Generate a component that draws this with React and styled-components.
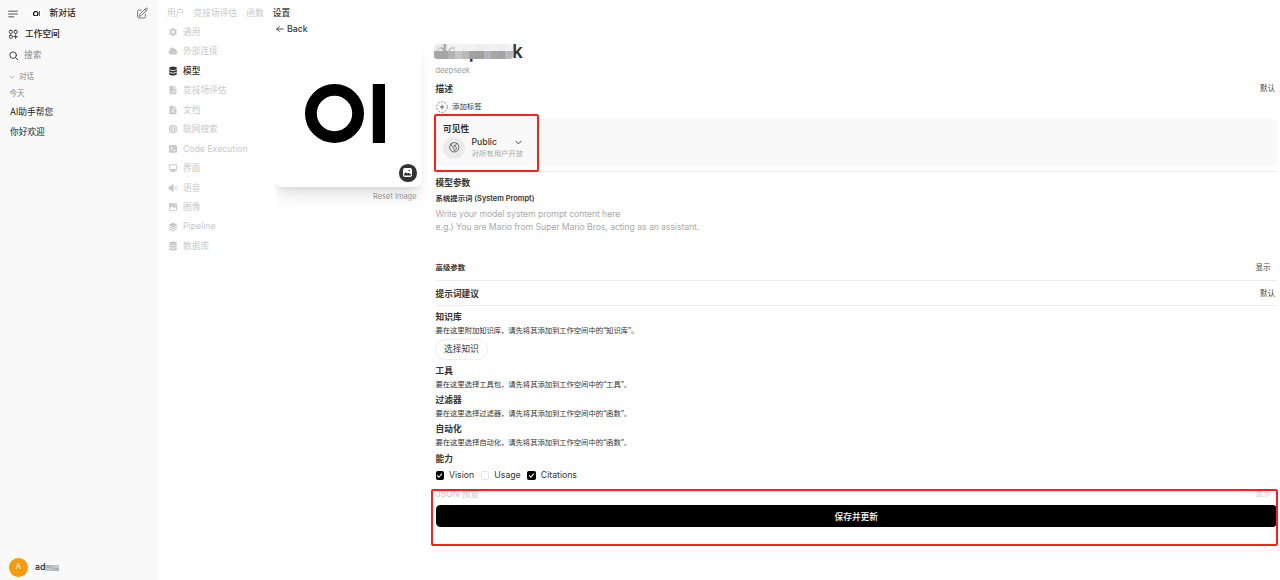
import React from 'react';
import styled, { createGlobalStyle, css } from 'styled-components';
import {
  HiCog6Tooth, HiCloud, HiSpeakerWave,
  HiOutlinePencilSquare, HiOutlineGlobeAmericas,
} from 'react-icons/hi2';

const Global = createGlobalStyle`
  * { box-sizing: border-box; }
  body {
    margin: 0;
    background: #fff;
    color: #333;
    font-family: Inter, "Noto Sans CJK SC", sans-serif;
    font-size: 8.7px;
    line-height: 12.4px;
    overflow: hidden;
  }
  svg { display: block; flex: none; }
`;

const Page = styled.div`
  display: flex;
  width: 1280px;
  height: 580px;
`;

const Sidebar = styled.aside`
  width: 157.5px;
  height: 580px;
  background: #f9f9f9;
  display: flex;
  flex-direction: column;
  flex: none;
  padding: 3px 9px 2px 8px;
`;

const SideRow = styled.div`
  display: flex;
  align-items: center;
  height: ${p => p.$h}px;
  padding-left: ${p => p.$indent || 0}px;
  gap: ${p => p.$gap || 0}px;
  color: ${p => p.$color || '#222'};
  font-size: ${p => (p.$small ? 7.5 : 8.7)}px;
  font-weight: ${p => (p.$medium ? 500 : 400)};
  white-space: nowrap;
`;

const UserRow = styled(SideRow)`
  margin-top: auto;
`;

const Push = styled.div`
  margin-left: auto;
  color: #555;
`;

const MiniLogo = styled.div`
  width: 12px;
  height: 12px;
  border-radius: 50%;
  background: #fff;
  display: flex;
  align-items: center;
  justify-content: center;
  margin: 0 7px 0 12.5px;
`;

const Avatar = styled.div`
  width: 18.5px;
  height: 18.5px;
  border-radius: 50%;
  background: #f39c12;
  color: #fff;
  display: flex;
  align-items: center;
  justify-content: center;
  font-size: 7.5px;
  font-weight: 400;
`;

const Masked = styled.div`
  display: flex;
  align-items: center;
`;

const Mosaic = styled.span`
  display: grid;
  grid-template-columns: repeat(${p => p.$cols}, ${p => p.$w}px);
  grid-auto-rows: ${p => p.$h}px;
  border-radius: ${p => p.$radius || 0}px;
  overflow: hidden;
`;

const Tile = styled.i`
  background: ${p => p.$c};
`;

const Content = styled.main`
  flex: 1;
  display: flex;
  flex-direction: column;
  min-width: 0;
`;

const Tabs = styled.nav`
  display: flex;
  align-items: center;
  gap: 9.2px;
  height: 23px;
  padding: 3px 0 0 9.5px;
`;

const Tab = styled.span`
  color: ${p => (p.$active ? '#333' : '#c9c9c9')};
  font-weight: ${p => (p.$active ? 500 : 400)};
`;

const Body = styled.div`
  display: flex;
  flex: 1;
  min-height: 0;
`;

const Menu = styled.div`
  width: 117.5px;
  flex: none;
  padding-left: 10.5px;
  display: flex;
  flex-direction: column;
`;

const MenuItem = styled.div`
  display: flex;
  align-items: center;
  gap: 5px;
  height: 19.48px;
  padding-bottom: 1.5px;
  color: ${p => (p.$active ? '#333' : '#c9c9c9')};
  font-weight: ${p => (p.$active ? 500 : 400)};
  white-space: nowrap;
`;

const Editor = styled.section`
  flex: 1;
  min-width: 0;
  overflow: hidden;
`;

const Back = styled.div`
  display: flex;
  align-items: center;
  gap: 3px;
  height: 12px;
  padding-left: 1px;
  color: #333;
  font-weight: 500;
  font-size: 8.7px;
`;

const Columns = styled.div`
  display: flex;
  padding-top: 5px;
`;

const ImageColumn = styled.div`
  width: 146.5px;
  flex: none;
`;

const ImageCard = styled.div`
  height: 146.5px;
  border-radius: 7px;
  background: #fff;
  box-shadow: 0 12px 16px -3px rgba(0, 0, 0, 0.1), 0 5px 6px -4px rgba(0, 0, 0, 0.1);
  position: relative;
`;

const ImageBadge = styled.div`
  position: absolute;
  right: 5px;
  bottom: 5px;
  width: 17.5px;
  height: 17.5px;
  border-radius: 50%;
  background: #333;
  display: flex;
  align-items: center;
  justify-content: center;
`;

const Reset = styled.div`
  text-align: right;
  font-size: 7.45px;
  color: #999;
  padding: 4px 5px 0 0;
`;

const Form = styled.div`
  flex: 1;
  min-width: 0;
  margin: 0 3px 0 14px;
`;

const Row = styled.div`
  display: flex;
  align-items: center;
  height: ${p => p.$h}px;
  margin-top: ${p => p.$mt || 0}px;
  padding-top: 1.5px;
  padding-right: ${p => p.$pr ?? 2}px;
  gap: ${p => p.$gap || 0}px;
  color: ${p => p.$color || '#333'};
  font-size: ${p => (p.$small ? 7.4 : 8.7)}px;
  font-weight: ${p => (p.$bold ? 600 : 400)};
  white-space: nowrap;
`;

const Description = styled(Row)`
  font-size: 7.4px;
  letter-spacing: -0.11px;
`;

const Action = styled.span`
  margin-left: auto;
  font-size: 7.5px;
  font-weight: 400;
  color: ${p => p.$color || '#444'};
`;

const Title = styled.div`
  position: relative;
  height: 24px;
  display: flex;
  align-items: center;
  padding-bottom: 2px;
  font-size: 18.6px;
  line-height: 24px;
  font-weight: 600;
  letter-spacing: -0.1px;
`;

const TitleMask = styled.div`
  position: absolute;
  left: -2px;
  top: 4px;
`;

const Panel = styled.div`
  height: 48px;
  margin: 5px 0;
  padding: 4px 0 0 7.5px;
  background: #f9f9f9;
  border-radius: 5px;
  position: relative;
`;

const frame = css`
  position: absolute;
  border: 2px solid #fb1f14;
  border-radius: 2px;
  pointer-events: none;
`;

const PanelFrame = styled.div`
  ${frame}
  left: -2px;
  top: -4px;
  width: 105px;
  height: 58px;
`;

const FooterFrame = styled.div`
  ${frame}
  left: -5px;
  right: -1px;
  top: 0;
  height: 57px;
`;

const Access = styled.div`
  display: flex;
  align-items: center;
  gap: 6.5px;
  padding-top: 1.5px;
`;

const AccessIcon = styled.div`
  width: 22px;
  height: 22px;
  border-radius: 50%;
  background: #ebebeb;
  display: flex;
  align-items: center;
  justify-content: center;
  color: #444;
`;

const AccessText = styled.div`
  display: flex;
  flex-direction: column;
  line-height: 11px;
`;

const AccessSelect = styled.div`
  display: flex;
  align-items: center;
  justify-content: space-between;
  width: 50px;
  font-size: 8.7px;
  font-weight: 500;
`;

const Hint = styled.span`
  font-size: 7.4px;
  color: #aaa;
`;

const Rule = styled.hr`
  height: 1px;
  margin: 0;
  border: 0;
  background: #ececec;
`;

const Prompt = styled.div`
  height: 50px;
  padding-top: 3.3px;
  font-size: 8.7px;
  letter-spacing: -0.085px;
  color: #aaa;
  white-space: pre-line;
`;

const Pill = styled.button`
  display: flex;
  align-items: center;
  height: 20.5px;
  margin: 5px 0 0.5px -0.5px;
  padding: 0 8px;
  border: 1px solid #ededed;
  border-radius: 11px;
  background: #fff;
  color: #333;
  font: inherit;
`;

const Check = styled.span`
  width: 8.5px;
  height: 8.5px;
  border-radius: 1.5px;
  background: ${p => (p.$on ? '#000' : '#fff')};
  border: 1px solid ${p => (p.$on ? '#000' : '#e3e3e3')};
  display: flex;
  align-items: center;
  justify-content: center;
  color: #fff;
`;

const Option = styled.label`
  display: flex;
  align-items: center;
  gap: 5px;
  margin-right: 6.7px;
`;

const Footer = styled.div`
  position: relative;
  margin-top: 9px;
  height: 57px;
`;

const Save = styled.button`
  display: flex;
  align-items: center;
  justify-content: center;
  width: 100%;
  height: 22px;
  margin-top: 6.5px;
  padding: 1.5px 0 0;
  border: 0;
  border-radius: 4.5px;
  background: #000;
  color: #fff;
  font: inherit;
  font-weight: 500;
`;

const OI = ({ width }) => (
  <svg width={width} height={width * 59 / 80} viewBox="0 0 80 59">
    <circle cx="29.5" cy="29.5" r="23.6" fill="none" stroke="#000" strokeWidth="11.8" />
    <path d="M67.8 0H80V59H67.8z" fill="#000" />
  </svg>
);

const LogoHolder = styled.div`
  padding: 43.7px 0 0 30px;
`;

const Stroke = ({ size = 10, d, w = 1.5 }) => (
  <svg width={size} height={size} viewBox="0 0 16 16" fill="none" stroke="currentColor" strokeWidth={w} strokeLinecap="round" strokeLinejoin="round">
    <path d={d} />
  </svg>
);

const Solid = ({ d, size = 10 }) => (
  <svg width={size} height={size} viewBox="0 0 16 16" fill="currentColor" fillRule="evenodd">
    <path d={d} />
  </svg>
);

const TERMINAL = 'M3.5 2h9A1.5 1.5 0 0 1 14.500 3.5v9a1.5 1.5 0 0 1-1.5 1.5h-10A1.5 1.5 0 0 1 1.500 12.500v-9A1.5 1.5 0 0 1 3 2zM4 5.600 5.700 7.200 4 8.800l1 1L7.700 7.200 5 4.600zM8 9.300v1.300h4V9.300z';
const SCREEN = 'M3.5 2h9a2 2 0 0 1 2 2v6a2 2 0 0 1-2 2h-1.6l.8 1.300v.9H4.300v-.9L5.100 12H3.500a2 2 0 0 1-2-2V4a2 2 0 0 1 2-2zM3.700 3.500a.7.7 0 0 0-.7.7V9a.7.7 0 0 0 .7.7h8.600A.7.7 0 0 0 13 9V4.200a.7.7 0 0 0-.7-.7z';
const PHOTO = 'M3.500 2h9a2 2 0 0 1 2 2v8a2 2 0 0 1-2 2h-9a2 2 0 0 1-2-2V4a2 2 0 0 1 2-2zM3 9.500V12a.6.6 0 0 0 .6.600h8.800A.6.6 0 0 0 13 12V9.500l-2-1.600-2 1.700-3-3zM10 4.200v1.800h1.800V4.200z';
const LAYERS = 'M8 .8 15.300 4.600 8 8.400.7 4.600zM2.600 6.900 8 9.700l5.400-2.800 1.900 1L8 11.700.7 7.900zM2.600 10.200 8 13l5.400-2.800 1.900 1L8 15.200.7 11.200z';

const Database = () => (
  <svg width="10" height="10" viewBox="0 0 16 16" fill="currentColor">
    <ellipse cx="8" cy="3.600" rx="6.200" ry="2.900" />
    <path d="M1.800 5.500C3 7 5.300 7.700 8 7.700S13 7 14.200 5.500V8c0 1.500-2.800 2.600-6.200 2.600S1.800 9.500 1.800 8z" />
    <path d="M1.800 9.800C3 11.300 5.300 12 8 12s5-.7 6.200-2.200v2.500c0 1.600-2.800 2.900-6.200 2.900s-6.200-1.300-6.200-2.900z" />
  </svg>
);

const File = ({ search }) => (
  <svg width="10" height="10" viewBox="0 0 16 16">
    <path d="M3.800 1.300h5v4.200h4.700v7.700a1.500 1.500 0 0 1-1.500 1.500H3.800a1.500 1.500 0 0 1-1.500-1.500V2.800a1.500 1.500 0 0 1 1.500-1.500zM10 1.300l3.500 3.200H10z" fill="currentColor" />
    {search
      ? <g fill="none" stroke="#fff" strokeWidth="1.200"><circle cx="7.500" cy="9" r="2" /><path d="m9 10.500 2 2" /></g>
      : <path d="M5.200 10.700V12.500M8 9v3.500M10.800 7.500v5" stroke="#fff" strokeWidth="1.200" />}
  </svg>
);

const Web = () => (
  <svg width="10" height="10" viewBox="0 0 16 16" fill="none" stroke="currentColor" strokeWidth="1.600">
    <circle cx="8" cy="8" r="6.200" />
    <ellipse cx="8" cy="8" rx="2.700" ry="6" />
    <path d="M2 8h12" />
    <path d="M3 5.200h10M3 10.800h10" strokeWidth=".8" />
  </svg>
);

const WorkspaceIcon = () => (
  <svg width="10.500" height="10.500" viewBox="0 0 24 24" fill="none" stroke="currentColor" strokeWidth="2" strokeLinecap="round">
    <rect x="3" y="3" width="7" height="7" rx="2.500" />
    <rect x="14" y="3" width="7" height="7" rx="2.500" />
    <rect x="3" y="14" width="7" height="7" rx="2.500" />
    <path d="M17.500 13.500v8M13.500 17.500h8" />
  </svg>
);

const TagPlus = () => (
  <svg width="12" height="12" viewBox="0 0 24 24" fill="none" stroke="#555">
    <circle cx="12" cy="12" r="10.700" strokeWidth="1.400" strokeDasharray="4.200 2.520" />
    <path d="M12 7.500v9M7.500 12h9" strokeWidth="1.800" />
  </svg>
);

const BadgePhoto = () => (
  <svg width="11" height="11" viewBox="0 0 16 16">
    <rect x="1.500" y="1.500" width="13" height="13" rx="2.500" fill="#fff" />
    <path d="M3 12.500V10l2.500-2.500 2 2L9.200 8.300 13 10.500v2z" fill="#333" />
    <circle cx="10.500" cy="5" r="1.100" fill="#333" />
  </svg>
);

const TITLE_TILES = [
  '#e9e9e9e0', '#dededeb0', '#efefefd0', '#f3f3f3', '#f0f0f0', '#f2f2f2', '#ededed', '#f0f0f0', '#f1f1f1', '#eeeeee', '#f2f2f2',
  '#a6a6a6', '#aaa5a0', '#b0b4b7', '#c5c5c5', '#bdb8b3', '#9ea1a6', '#a3a09c', '#b1b4b8', '#aaa7a2', '#9ea4a9', '#b8b8b8',
];
const USER_TILES = ['#9fb8cf', '#b4b4b4', '#bdbdbd', '#c8c8c8', '#b8ccd0'];

const MENU = [
  ['通用', <HiCog6Tooth size={10} />],
  ['外部连接', <HiCloud size={10} />],
  ['模型', <Database />],
  ['竞技场评估', <File />],
  ['文档', <File search />],
  ['联网搜索', <Web />],
  ['Code Execution', <Solid d={TERMINAL} />],
  ['界面', <Solid d={SCREEN} />],
  ['语音', <HiSpeakerWave size={10} />],
  ['图像', <Solid d={PHOTO} />],
  ['Pipeline', <Solid d={LAYERS} />],
  ['数据库', <Database />],
];

const Capability = ({ on, children }) => (
  <Option>
    <Check $on={on}>{on && <Stroke size={7} d="M3 8.500 6.500 12 13 4.500" w={2.400} />}</Check>
    {children}
  </Option>
);

export default function App() {
  return (
    <Page>
      <Global />
      <Sidebar>
        <SideRow $h={21} $medium>
          <Stroke size={10} d="M1 3.500h14M1 8h14M1 12.500h8.500" w={1.200} />
          <MiniLogo><OI width={7.5} /></MiniLogo>
          新对话
          <Push><HiOutlinePencilSquare size={12.5} /></Push>
        </SideRow>
        <SideRow $h={21} $gap={6.5} $medium><WorkspaceIcon />工作空间</SideRow>
        <SideRow $h={21} $gap={6} $indent={0.5} $color="#888">
          <svg width="9.500" height="9.500" viewBox="0 0 16 16" fill="none" stroke="#333" strokeWidth="1.500" strokeLinecap="round">
            <circle cx="7" cy="7" r="5.500" /><path d="m11 11 4 4" />
          </svg>
          搜索
        </SideRow>
        <SideRow $h={21.5} $gap={4} $indent={1} $small $color="#888">
          <Stroke size={6} d="M2 5l6 6 6-6" w={1.600} />对话
        </SideRow>
        <SideRow $h={12.5} $indent={1.5} $small $color="#888">今天</SideRow>
        <SideRow $h={24.5} $indent={2}>AI助手帮您</SideRow>
        <SideRow $h={15.5} $indent={2}>你好欢迎</SideRow>
        <UserRow $h={21} $gap={7.5} $indent={1} $medium>
          <Avatar>A</Avatar>
          <Masked>
            ad
            <Mosaic $cols={5} $w={2.8} $h={3}>
              {[...USER_TILES, ...USER_TILES.slice().reverse()].map((c, i) => <Tile key={i} $c={c} />)}
            </Mosaic>
          </Masked>
        </UserRow>
      </Sidebar>

      <Content>
        <Tabs>
          <Tab>用户</Tab><Tab>竞技场评估</Tab><Tab>函数</Tab><Tab $active>设置</Tab>
        </Tabs>
        <Body>
          <Menu>
            {MENU.map(([label, icon]) => (
              <MenuItem key={label} $active={label === '模型'}>{icon}{label}</MenuItem>
            ))}
          </Menu>
          <Editor>
            <Back><Stroke size={8} d="M14.500 8h-13M6.500 3l-5 5 5 5" w={1.700} />Back</Back>
            <Columns>
              <ImageColumn>
                <ImageCard>
                  <LogoHolder><OI width={80} /></LogoHolder>
                  <ImageBadge><BadgePhoto /></ImageBadge>
                </ImageCard>
                <Reset>Reset Image</Reset>
              </ImageColumn>
              <Form>
                <Title>
                  deepseek
                  <TitleMask>
                    <Mosaic $cols={11} $w={7.2} $h={7.3} $radius={3}>
                      {TITLE_TILES.map((c, i) => <Tile key={i} $c={c} />)}
                    </Mosaic>
                  </TitleMask>
                </Title>
                <Row $h={13} $small $color="#999">deepseek</Row>
                <Row $h={23} $bold>描述<Action>默认</Action></Row>
                <Row $h={13} $small $gap={4.5}><TagPlus />添加标签</Row>
                <Panel>
                  <Row $h={13} $bold>可见性</Row>
                  <Access>
                    <AccessIcon><HiOutlineGlobeAmericas size={12.5} /></AccessIcon>
                    <AccessText>
                      <AccessSelect>Public<Stroke size={7} d="M2 5l6 6 6-6" w={2} /></AccessSelect>
                      <Hint>对所有用户开放</Hint>
                    </AccessText>
                  </Access>
                  <PanelFrame />
                </Panel>
                <Rule />
                <Row $h={20} $bold>模型参数</Row>
                <Row $h={13} $bold $small>系统提示词 (System Prompt)</Row>
                <Prompt>{'Write your model system prompt content here\ne.g.) You are Mario from Super Mario Bros, acting as an assistant.'}</Prompt>
                <Row $h={25} $bold $small $pr={6.5}>高级参数<Action>显示</Action></Row>
                <Rule />
                <Row $h={24} $bold>提示词建议<Action>默认</Action></Row>
                <Rule />
                <Row $h={21} $bold>知识库</Row>
                <Description $h={7}>要在这里附加知识库，请先将其添加到工作空间中的“知识库”。</Description>
                <Pill>选择知识</Pill>
                <Row $h={20} $bold>工具</Row>
                <Description $h={8}>要在这里选择工具包，请先将其添加到工作空间中的“工具”。</Description>
                <Row $h={19} $mt={2} $bold>过滤器</Row>
                <Description $h={9}>要在这里选择过滤器，请先将其添加到工作空间中的“函数”。</Description>
                <Row $h={20} $bold>自动化</Row>
                <Description $h={9}>要在这里选择自动化，请先将其添加到工作空间中的“函数”。</Description>
                <Row $h={22} $bold>能力</Row>
                <Row $h={11}>
                  <Capability on>Vision</Capability>
                  <Capability>Usage</Capability>
                  <Capability on>Citations</Capability>
                </Row>
                <Footer>
                  <Row $h={9.5} $color="#c4c4c4" $pr={6.5}>JSON 预览<Action $color="#ccc">显示</Action></Row>
                  <Save>保存并更新</Save>
                  <FooterFrame />
                </Footer>
              </Form>
            </Columns>
          </Editor>
        </Body>
      </Content>
    </Page>
  );
}
